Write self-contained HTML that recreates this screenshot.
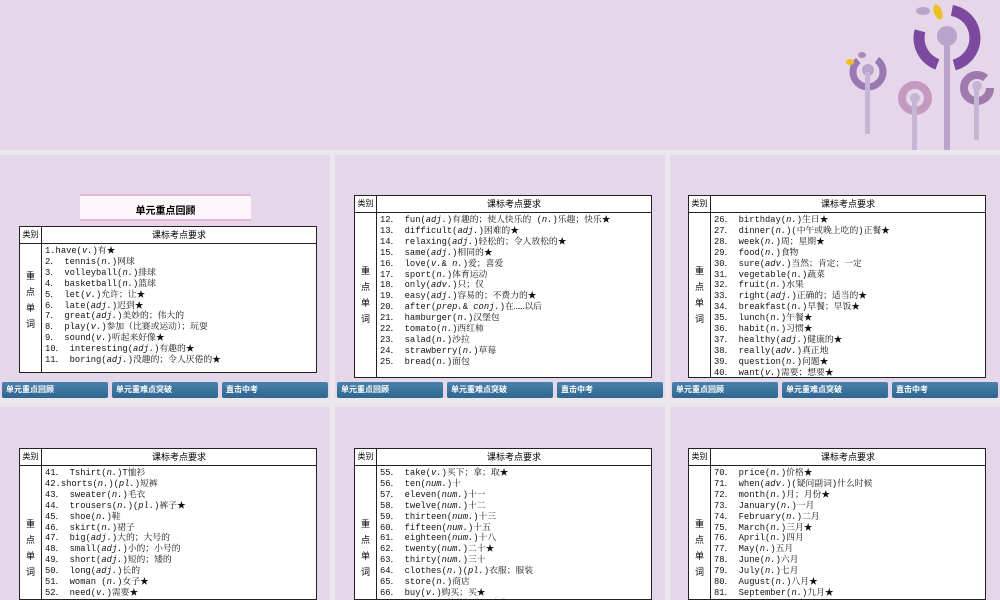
<!DOCTYPE html>
<html><head><meta charset="utf-8"><style>
*{margin:0;padding:0;box-sizing:border-box}
body{width:1000px;height:600px;overflow:hidden;background:#ebe7ec;position:relative;font-family:"Liberation Mono","Noto Serif CJK SC",monospace}
.top{position:absolute;left:0;top:0;width:1000px;height:150px;background:#e6d6e9}
.s{position:absolute;width:330px;background:#e6d6e9;overflow:hidden}
.t{position:absolute;left:19px;width:298px;background:#fff;border:1px solid #222;overflow:hidden}
.h{height:17px;border-bottom:1px solid #222;display:flex;font-size:9px;line-height:16px;font-family:"Noto Sans CJK SC",sans-serif}
.h .a{width:22px;border-right:1px solid #222;text-align:center;font-size:8px}
.h .b{flex:1;text-align:center}
.bd{display:flex;height:400px}
.bd .a{width:22px;border-right:1px solid #222;font-family:"Noto Sans CJK SC",sans-serif;font-size:9px;text-align:center;line-height:16px;padding-top:0}
.bd .b{flex:1;padding:2px 0 0 3px;font-size:8.8px;line-height:10.9px;white-space:pre;color:#111}
.nav{position:absolute;left:0;top:227px;width:330px;height:16px;display:flex;gap:4px;padding:0 2px}
.nav div{flex:1;background:linear-gradient(#4a82ad,#2f6690);color:#fff;font-size:8px;line-height:16px;padding-left:4px;border-radius:2px;font-family:"Noto Sans CJK SC",sans-serif;font-weight:bold}
i{font-style:italic}
</style></head><body>
<div class="top"></div>
<svg style="position:absolute;left:820px;top:0" width="180" height="150">
<g fill="none">
<path d="M131.9 10.4 A28 28 0 0 1 134.2 65" stroke="#7b4a9e" stroke-width="11"/>
<path d="M117.4 64.3 A28 28 0 0 1 100 30.8" stroke="#7b4a9e" stroke-width="11"/>
<rect x="124" y="38" width="6" height="112" fill="#b9a4cc"/>
<circle cx="127" cy="36" r="10" fill="#b9a4cc"/>
<ellipse cx="118" cy="12" rx="4" ry="8" fill="#f0c020" transform="rotate(-20 118 12)"/>
<ellipse cx="103" cy="11" rx="7" ry="4" fill="#b9a4cc"/>
<circle cx="48" cy="72" r="15" stroke="#9a78b0" stroke-width="7" stroke-dasharray="60 20"/>
<circle cx="48" cy="70" r="6" fill="#b9a4cc"/>
<rect x="45" y="72" width="5" height="62" fill="#c6b6d6"/>
<ellipse cx="30" cy="62" rx="4" ry="3" fill="#f0c020"/>
<ellipse cx="42" cy="55" rx="4" ry="3" fill="#a88ab8"/>
<circle cx="95" cy="98" r="13" stroke="#c49ac0" stroke-width="8"/>
<circle cx="95" cy="98" r="5" fill="#c6b6d6"/>
<rect x="92" y="100" width="5" height="50" fill="#c6b6d6"/>
<circle cx="157" cy="88" r="13" stroke="#a07aad" stroke-width="8" stroke-dasharray="70 12"/>
<circle cx="157" cy="86" r="5" fill="#c6b6d6"/>
<rect x="154" y="88" width="5" height="52" fill="#c6b6d6"/>
</g></svg>

<!-- row 1 -->
<div class="s" style="left:0;top:155px;height:243px">
<div style="position:absolute;left:80px;top:39px;width:171px;height:27px;background:#fdf6fb;text-align:center;font-family:'Noto Sans CJK SC',sans-serif;font-weight:bold;font-size:10px;line-height:27px;border-top:2px solid #e7b7d8;border-bottom:2px solid #e7b7d8">单元重点回顾</div>
<div class="t" style="top:71px;height:147px"><div class="h"><div class="a">类别</div><div class="b">课标考点要求</div></div>
<div class="bd"><div class="a" style="padding-top:24px">重<br>点<br>单<br>词</div><div class="b">1.have(<i>v.</i>)有★
2． tennis(<i>n.</i>)网球
3． volleyball(<i>n.</i>)排球
4． basketball(<i>n.</i>)篮球
5． let(<i>v.</i>)允许；让★
6． late(<i>adj.</i>)迟到★
7． great(<i>adj.</i>)美妙的；伟大的
8． play(<i>v.</i>)参加（比赛或运动）；玩耍
9． sound(<i>v.</i>)听起来好像★
10． interesting(<i>adj.</i>)有趣的★
11． boring(<i>adj.</i>)没趣的；令人厌倦的★</div></div></div>
<div class="nav"><div>单元重点回顾</div><div>单元重难点突破</div><div>直击中考</div></div></div>

<div class="s" style="left:335px;top:155px;height:243px">
<div class="t" style="top:40px;left:19px;height:183px"><div class="h"><div class="a">类别</div><div class="b">课标考点要求</div></div>
<div class="bd"><div class="a" style="padding-top:50px">重<br>点<br>单<br>词</div><div class="b">12． fun(<i>adj.</i>)有趣的；使人快乐的 (<i>n.</i>)乐趣；快乐★
13． difficult(<i>adj.</i>)困难的★
14． relaxing(<i>adj.</i>)轻松的；令人放松的★
15． same(<i>adj.</i>)相同的★
16． love(<i>v.</i>& <i>n.</i>)爱；喜爱
17． sport(<i>n.</i>)体育运动
18． only(<i>adv.</i>)只；仅
19． easy(<i>adj.</i>)容易的；不费力的★
20． after(<i>prep.</i>& <i>conj.</i>)在……以后
21． hamburger(<i>n.</i>)汉堡包
22． tomato(<i>n.</i>)西红柿
23． salad(<i>n.</i>)沙拉
24． strawberry(<i>n.</i>)草莓
25． bread(<i>n.</i>)面包</div></div></div>
<div class="nav"><div>单元重点回顾</div><div>单元重难点突破</div><div>直击中考</div></div></div>

<div class="s" style="left:670px;top:155px;height:243px">
<div class="t" style="top:40px;left:18px;height:183px"><div class="h"><div class="a">类别</div><div class="b">课标考点要求</div></div>
<div class="bd"><div class="a" style="padding-top:50px">重<br>点<br>单<br>词</div><div class="b">26． birthday(<i>n.</i>)生日★
27． dinner(<i>n.</i>)(中午或晚上吃的)正餐★
28． week(<i>n.</i>)周；星期★
29． food(<i>n.</i>)食物
30． sure(<i>adv.</i>)当然；肯定；一定
31． vegetable(<i>n.</i>)蔬菜
32． fruit(<i>n.</i>)水果
33． right(<i>adj.</i>)正确的；适当的★
34． breakfast(<i>n.</i>)早餐；早饭★
35． lunch(<i>n.</i>)午餐★
36． habit(<i>n.</i>)习惯★
37． healthy(<i>adj.</i>)健康的★
38． really(<i>adv.</i>)真正地
39． question(<i>n.</i>)问题★
40． want(<i>v.</i>)需要；想要★</div></div></div>
<div class="nav"><div>单元重点回顾</div><div>单元重难点突破</div><div>直击中考</div></div></div>

<!-- row 2 -->
<div class="s" style="left:0;top:407px;height:193px">
<div class="t" style="top:41px;height:152px"><div class="h"><div class="a">类别</div><div class="b">课标考点要求</div></div>
<div class="bd"><div class="a" style="padding-top:50px">重<br>点<br>单<br>词</div><div class="b">41． Tshirt(<i>n.</i>)T恤衫
42.shorts(<i>n.</i>)(<i>pl.</i>)短裤
43． sweater(<i>n.</i>)毛衣
44． trousers(<i>n.</i>)(<i>pl.</i>)裤子★
45． shoe(<i>n.</i>)鞋
46． skirt(<i>n.</i>)裙子
47． big(<i>adj.</i>)大的；大号的
48． small(<i>adj.</i>)小的；小号的
49． short(<i>adj.</i>)短的；矮的
50． long(<i>adj.</i>)长的
51． woman (<i>n.</i>)女子★
52． need(<i>v.</i>)需要★</div></div></div></div>

<div class="s" style="left:335px;top:407px;height:193px">
<div class="t" style="top:41px;left:19px;height:152px"><div class="h"><div class="a">类别</div><div class="b">课标考点要求</div></div>
<div class="bd"><div class="a" style="padding-top:50px">重<br>点<br>单<br>词</div><div class="b">55． take(<i>v.</i>)买下；拿；取★
56． ten(<i>num.</i>)十
57． eleven(<i>num.</i>)十一
58． twelve(<i>num.</i>)十二
59． thirteen(<i>num.</i>)十三
60． fifteen(<i>num.</i>)十五
61． eighteen(<i>num.</i>)十八
62． twenty(<i>num.</i>)二十★
63． thirty(<i>num.</i>)三十
64． clothes(<i>n.</i>)(<i>pl.</i>)衣服；服装
65． store(<i>n.</i>)商店
66． buy(<i>v.</i>)购买；买★
67． sale(<i>n.</i>)特价销售；出售★</div></div></div></div>

<div class="s" style="left:670px;top:407px;height:193px">
<div class="t" style="top:41px;left:18px;height:152px"><div class="h"><div class="a">类别</div><div class="b">课标考点要求</div></div>
<div class="bd"><div class="a" style="padding-top:50px">重<br>点<br>单<br>词</div><div class="b">70． price(<i>n.</i>)价格★
71． when(<i>adv.</i>)(疑问副词)什么时候
72． month(<i>n.</i>)月；月份★
73． January(<i>n.</i>)一月
74． February(<i>n.</i>)二月
75． March(<i>n.</i>)三月★
76． April(<i>n.</i>)四月
77． May(<i>n.</i>)五月
78． June(<i>n.</i>)六月
79． July(<i>n.</i>)七月
80． August(<i>n.</i>)八月★
81． September(<i>n.</i>)九月★
82． October(<i>n.</i>)十月★</div></div></div></div>
</body></html>
